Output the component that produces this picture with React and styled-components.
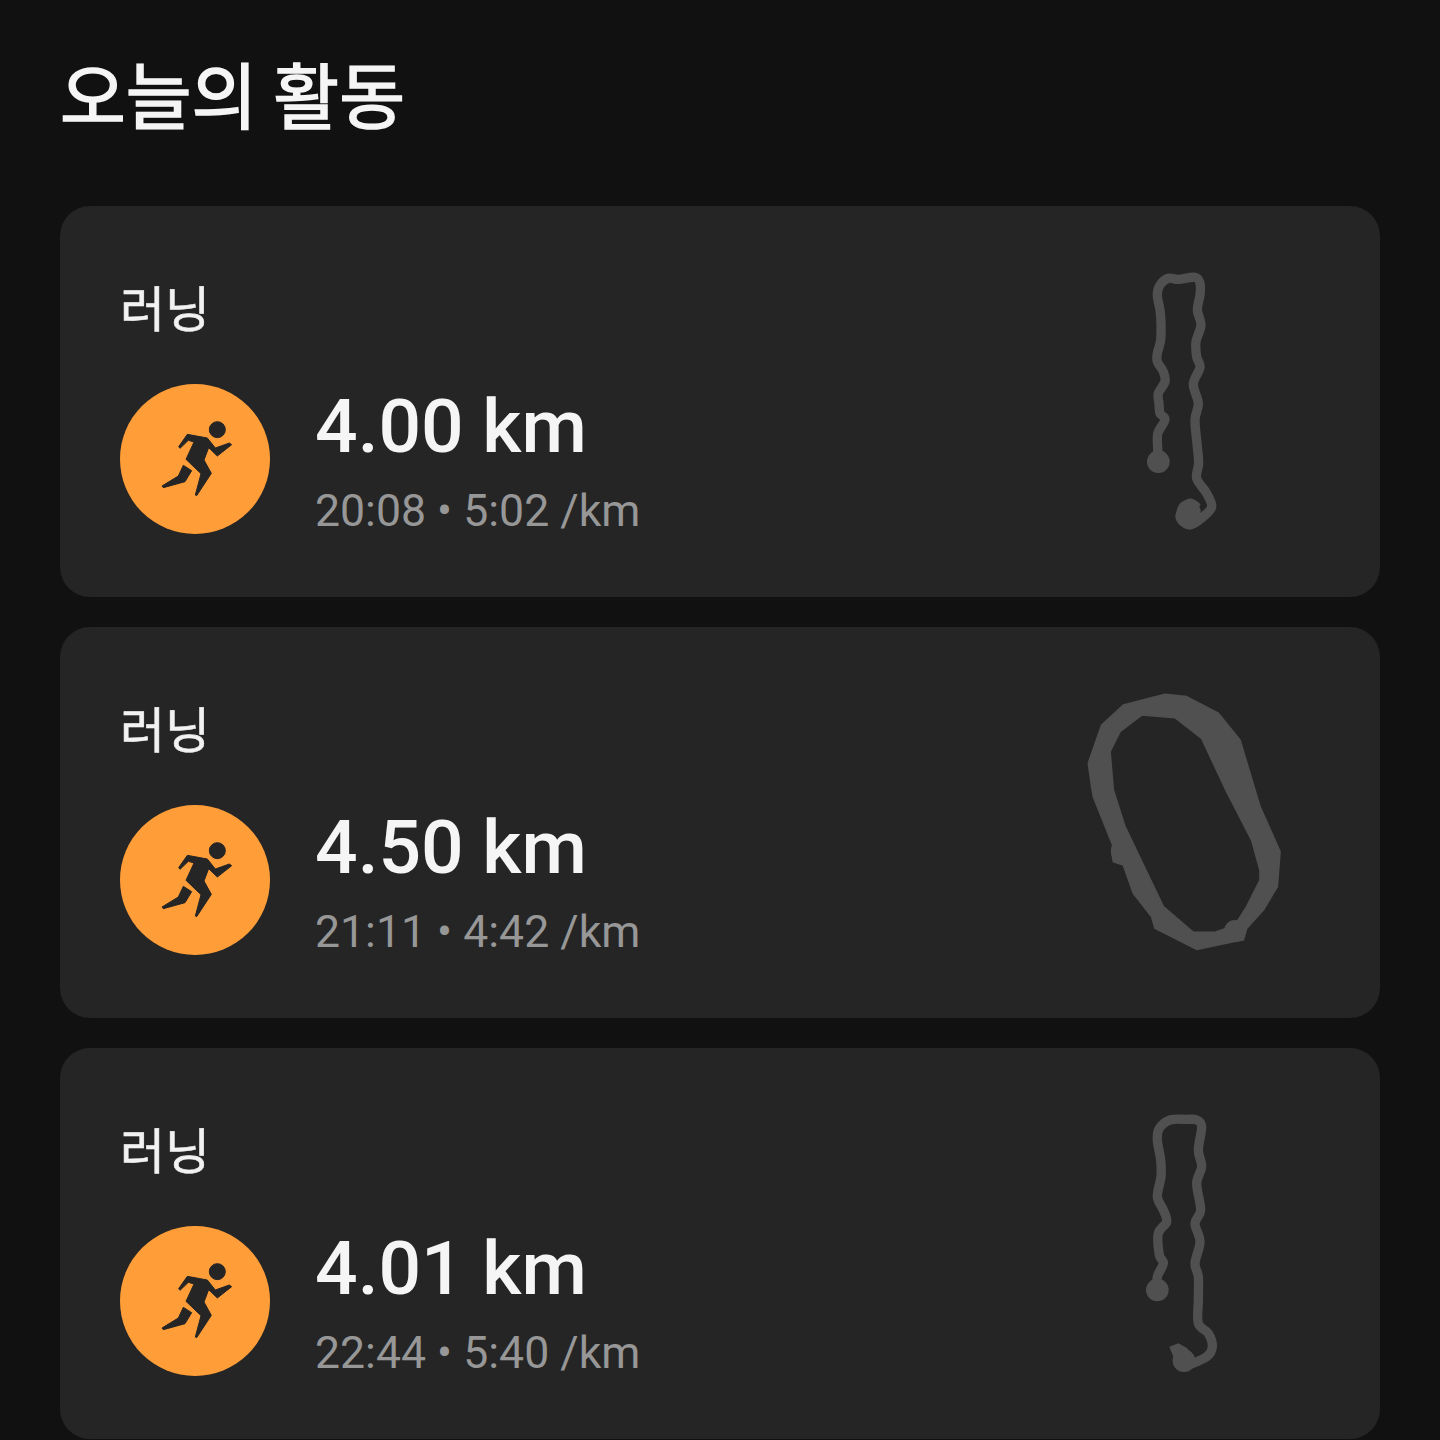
import React from "react";
import styled, { createGlobalStyle } from "styled-components";

const GlobalStyle = createGlobalStyle`
  html, body {
    margin: 0;
    padding: 0;
    background: #111112;
  }
`;

// route shapes are traced at 3x, the svg viewBox is 690x840 for a 230x280 box
const smooth = (points) => {
  let d = `M${points[0][0]} ${points[0][1]}`;
  for (let i = 0; i < points.length - 1; i++) {
    const p0 = points[i - 1] || points[i];
    const p1 = points[i];
    const p2 = points[i + 1];
    const p3 = points[i + 2] || p2;
    const c1x = p1[0] + (p2[0] - p0[0]) / 6;
    const c1y = p1[1] + (p2[1] - p0[1]) / 6;
    const c2x = p2[0] - (p3[0] - p1[0]) / 6;
    const c2y = p2[1] - (p3[1] - p1[1]) / 6;
    d += ` C${c1x} ${c1y} ${c2x} ${c2y} ${p2[0]} ${p2[1]}`;
  }
  return d;
};

const poly = (points) => `M${points.map((p) => p.join(" ")).join(" L")} Z`;

const ROUTE_A = [
  [175, 605], [172, 530], [178, 510], [195, 478], [180, 460], [177, 430], [175, 400],
  [195, 365], [190, 335], [172, 305], [172, 280], [182, 240], [183, 190], [180, 150],
  [172, 105], [180, 75], [205, 55], [235, 58], [285, 52], [300, 70], [300, 105],
  [292, 150], [303, 195], [288, 245], [290, 290], [300, 322], [280, 372], [295, 430],
  [285, 480], [292, 560], [296, 610], [290, 655], [320, 700], [335, 740], [310, 770],
  [270, 795], [240, 770], [268, 730], [295, 745],
];

const ROUTE_C = [
  [172, 570], [172, 530], [190, 490], [178, 465], [175, 400], [200, 365], [190, 330],
  [172, 290], [183, 230], [182, 180], [172, 120], [178, 85], [210, 60], [260, 58],
  [290, 60], [305, 80], [295, 150], [305, 200], [290, 250], [302, 330], [285, 370],
  [300, 425], [285, 490], [295, 530], [295, 600], [295, 670], [325, 700], [337, 740],
  [320, 770], [255, 800],
];

const LOOP_OUTER = [
  [285, 43], [350, 50], [445, 100], [510, 180], [570, 380], [630, 515], [622, 620],
  [580, 690], [530, 745], [520, 780], [490, 785], [465, 790], [380, 808], [255, 745],
  [245, 710], [190, 640], [160, 555], [130, 545], [125, 510], [128, 495], [70, 350],
  [65, 320], [55, 250], [95, 135], [160, 75],
];

const LOOP_INNER = [
  [215, 105], [315, 113], [395, 175], [470, 335], [545, 480], [570, 570], [570, 600],
  [530, 680], [505, 720], [470, 745], [435, 757], [370, 757], [280, 680], [165, 440],
  [130, 330], [120, 215], [150, 155],
];

const activities = [
  { distance: "4.00 km", time: "20:08", pace: "5:02 /km", route: "a" },
  { distance: "4.50 km", time: "21:11", pace: "4:42 /km", route: "b" },
  { distance: "4.01 km", time: "22:44", pace: "5:40 /km", route: "c" },
];

const RunnerIcon = () => (
  <svg width="150" height="150" viewBox="60 42 450 450">
    <g fill="#252525" stroke="#252525" strokeWidth="3" strokeLinejoin="round">
      <circle cx="352" cy="179" r="24" />
      <path d="M262 193 L322 204 L346 234 L388 219 L395 224 L352 258 L326 233 L312 270 L334 310 L290 377 L286 375 L303 311 L258 268 L282 216 L265 211 L240 235 L236 230 Z" />
      <path d="M250 286 L275 302 L255 335 L190 353 L186 348 L235 318 Z" />
    </g>
  </svg>
);

const RouteA = () => (
  <RouteSvg viewBox="0 0 690 840">
    <g transform="translate(90 0)" fill="#505050">
      <path d={smooth(ROUTE_A)} fill="none" stroke="#505050" strokeWidth="28" strokeLinejoin="round" />
      <circle cx="175" cy="605" r="34" />
      <circle cx="266" cy="755" r="36" />
    </g>
  </RouteSvg>
);

const RouteB = () => (
  <RouteSvg viewBox="0 0 690 840">
    <g transform="translate(0 -3)">
      <path
        fill="#505050"
        fillRule="evenodd"
        stroke="#505050"
        strokeWidth="5"
        strokeLinejoin="round"
        d={`${poly(LOOP_OUTER)} ${poly(LOOP_INNER)}`}
      />
      <circle cx="495" cy="753" r="33" fill="#505050" />
      <circle cx="150" cy="518" r="27" fill="#505050" />
    </g>
  </RouteSvg>
);

const RouteC = () => (
  <RouteSvg viewBox="0 0 690 840">
    <g transform="translate(90 -6)" fill="#505050">
      <path d={smooth(ROUTE_C)} fill="none" stroke="#505050" strokeWidth="28" strokeLinejoin="round" />
      <circle cx="172" cy="570" r="34" />
      <circle cx="252" cy="782" r="34" />
      <path d="M208 740 L235 730 L262 745 L275 780 L230 795 Z" />
    </g>
  </RouteSvg>
);

const routes = { a: RouteA, b: RouteB, c: RouteC };

const App = () => {
  return (
    <Page>
      <GlobalStyle />
      <Heading>오늘의 활동</Heading>
      <List>
        {activities.map((activity) => {
          const Route = routes[activity.route];
          return (
            <Card key={activity.distance}>
              <Info>
                <Label>러닝</Label>
                <Row>
                  <IconCircle>
                    <RunnerIcon />
                  </IconCircle>
                  <Stats>
                    <Distance>{activity.distance}</Distance>
                    <Meta>
                      {activity.time} • {activity.pace}
                    </Meta>
                  </Stats>
                </Row>
              </Info>
              <Route />
            </Card>
          );
        })}
      </List>
    </Page>
  );
};

const Page = styled.div`
  box-sizing: border-box;
  width: 1440px;
  height: 1440px;
  overflow: hidden;
  padding: 51px 60px 0;
  background: #111112;
  font-family: Roboto, "Noto Sans CJK KR", sans-serif;
`;

const Heading = styled.h1`
  margin: 0 0 72px;
  height: 83px;
  line-height: 83px;
  font-size: 71.5px;
  font-weight: 400;
  color: #f5f5f5;
  -webkit-text-stroke: 1.6px #f5f5f5;
  font-family: "Noto Sans CJK KR", sans-serif;
`;

const List = styled.div`
  display: flex;
  flex-direction: column;
  gap: 30px;
`;

const Card = styled.div`
  box-sizing: border-box;
  display: flex;
  justify-content: space-between;
  width: 1320px;
  height: 391px;
  padding: 0 80px 0 60px;
  background: #252525;
  border-radius: 30px;
`;

const Info = styled.div`
  display: flex;
  flex-direction: column;
`;

const Label = styled.div`
  margin-top: 70px;
  height: 60px;
  line-height: 60px;
  font-size: 49px;
  color: #f2f2f2;
  -webkit-text-stroke: 0.6px #f2f2f2;
  font-family: "Noto Sans CJK KR", sans-serif;
`;

const Row = styled.div`
  display: flex;
  align-items: flex-start;
  margin-top: 48px;
`;

const IconCircle = styled.div`
  flex: none;
  width: 150px;
  height: 150px;
  border-radius: 50%;
  background: #ff9e38;
`;

const Stats = styled.div`
  margin-left: 45px;
`;

const Distance = styled.div`
  height: 84px;
  line-height: 84px;
  font-size: 75px;
  font-weight: 500;
  color: #f5f5f5;
`;

const Meta = styled.div`
  margin-top: 18px;
  height: 50px;
  line-height: 50px;
  font-size: 44.6px;
  color: #979797;
`;

const RouteSvg = styled.svg`
  flex: none;
  width: 230px;
  height: 280px;
  margin-top: 54px;
`;

export default App;
